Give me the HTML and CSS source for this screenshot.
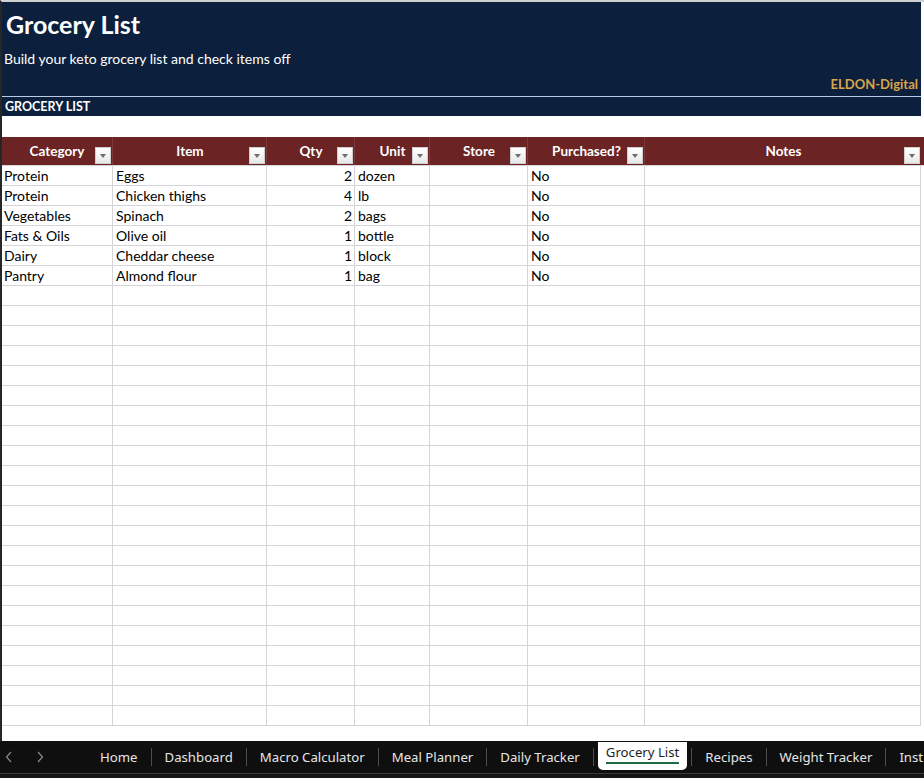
FILE: index.html
```html
<!DOCTYPE html>
<html lang="en">
<head>
  <meta charset="UTF-8" />
  <meta name="viewport" content="width=device-width, initial-scale=1" />
  <title>Grocery List</title>
  <link rel="stylesheet" href="styles.css">
</head>
<body>
  <div class="window">
    <div class="sheet">
      <header class="banner">
        <h1 class="title">Grocery List</h1>
        <p class="subtitle">Build your keto grocery list and check items off</p>
        <div class="brand">ELDON-Digital</div>
      </header>
      <div class="section-label">GROCERY LIST</div>
      <div class="blank-row"></div>

      <div class="grid">
        <div class="row head">
          <div class="cell">Category<span class="filter"></span></div>
          <div class="cell">Item<span class="filter"></span></div>
          <div class="cell">Qty<span class="filter"></span></div>
          <div class="cell">Unit<span class="filter"></span></div>
          <div class="cell">Store<span class="filter"></span></div>
          <div class="cell">Purchased?<span class="filter"></span></div>
          <div class="cell">Notes<span class="filter"></span></div>
        </div>

        <div class="row"><div class="cell">Protein</div><div class="cell">Eggs</div><div class="cell num">2</div><div class="cell">dozen</div><div class="cell"></div><div class="cell">No</div><div class="cell"></div></div>
        <div class="row"><div class="cell">Protein</div><div class="cell">Chicken thighs</div><div class="cell num">4</div><div class="cell">lb</div><div class="cell"></div><div class="cell">No</div><div class="cell"></div></div>
        <div class="row"><div class="cell">Vegetables</div><div class="cell">Spinach</div><div class="cell num">2</div><div class="cell">bags</div><div class="cell"></div><div class="cell">No</div><div class="cell"></div></div>
        <div class="row"><div class="cell">Fats &amp; Oils</div><div class="cell">Olive oil</div><div class="cell num">1</div><div class="cell">bottle</div><div class="cell"></div><div class="cell">No</div><div class="cell"></div></div>
        <div class="row"><div class="cell">Dairy</div><div class="cell">Cheddar cheese</div><div class="cell num">1</div><div class="cell">block</div><div class="cell"></div><div class="cell">No</div><div class="cell"></div></div>
        <div class="row"><div class="cell">Pantry</div><div class="cell">Almond flour</div><div class="cell num">1</div><div class="cell">bag</div><div class="cell"></div><div class="cell">No</div><div class="cell"></div></div>

        <div class="row"><div class="cell"></div><div class="cell"></div><div class="cell"></div><div class="cell"></div><div class="cell"></div><div class="cell"></div><div class="cell"></div></div>
        <div class="row"><div class="cell"></div><div class="cell"></div><div class="cell"></div><div class="cell"></div><div class="cell"></div><div class="cell"></div><div class="cell"></div></div>
        <div class="row"><div class="cell"></div><div class="cell"></div><div class="cell"></div><div class="cell"></div><div class="cell"></div><div class="cell"></div><div class="cell"></div></div>
        <div class="row"><div class="cell"></div><div class="cell"></div><div class="cell"></div><div class="cell"></div><div class="cell"></div><div class="cell"></div><div class="cell"></div></div>
        <div class="row"><div class="cell"></div><div class="cell"></div><div class="cell"></div><div class="cell"></div><div class="cell"></div><div class="cell"></div><div class="cell"></div></div>
        <div class="row"><div class="cell"></div><div class="cell"></div><div class="cell"></div><div class="cell"></div><div class="cell"></div><div class="cell"></div><div class="cell"></div></div>
        <div class="row"><div class="cell"></div><div class="cell"></div><div class="cell"></div><div class="cell"></div><div class="cell"></div><div class="cell"></div><div class="cell"></div></div>
        <div class="row"><div class="cell"></div><div class="cell"></div><div class="cell"></div><div class="cell"></div><div class="cell"></div><div class="cell"></div><div class="cell"></div></div>
        <div class="row"><div class="cell"></div><div class="cell"></div><div class="cell"></div><div class="cell"></div><div class="cell"></div><div class="cell"></div><div class="cell"></div></div>
        <div class="row"><div class="cell"></div><div class="cell"></div><div class="cell"></div><div class="cell"></div><div class="cell"></div><div class="cell"></div><div class="cell"></div></div>
        <div class="row"><div class="cell"></div><div class="cell"></div><div class="cell"></div><div class="cell"></div><div class="cell"></div><div class="cell"></div><div class="cell"></div></div>
        <div class="row"><div class="cell"></div><div class="cell"></div><div class="cell"></div><div class="cell"></div><div class="cell"></div><div class="cell"></div><div class="cell"></div></div>
        <div class="row"><div class="cell"></div><div class="cell"></div><div class="cell"></div><div class="cell"></div><div class="cell"></div><div class="cell"></div><div class="cell"></div></div>
        <div class="row"><div class="cell"></div><div class="cell"></div><div class="cell"></div><div class="cell"></div><div class="cell"></div><div class="cell"></div><div class="cell"></div></div>
        <div class="row"><div class="cell"></div><div class="cell"></div><div class="cell"></div><div class="cell"></div><div class="cell"></div><div class="cell"></div><div class="cell"></div></div>
        <div class="row"><div class="cell"></div><div class="cell"></div><div class="cell"></div><div class="cell"></div><div class="cell"></div><div class="cell"></div><div class="cell"></div></div>
        <div class="row"><div class="cell"></div><div class="cell"></div><div class="cell"></div><div class="cell"></div><div class="cell"></div><div class="cell"></div><div class="cell"></div></div>
        <div class="row"><div class="cell"></div><div class="cell"></div><div class="cell"></div><div class="cell"></div><div class="cell"></div><div class="cell"></div><div class="cell"></div></div>
        <div class="row"><div class="cell"></div><div class="cell"></div><div class="cell"></div><div class="cell"></div><div class="cell"></div><div class="cell"></div><div class="cell"></div></div>
        <div class="row"><div class="cell"></div><div class="cell"></div><div class="cell"></div><div class="cell"></div><div class="cell"></div><div class="cell"></div><div class="cell"></div></div>
        <div class="row"><div class="cell"></div><div class="cell"></div><div class="cell"></div><div class="cell"></div><div class="cell"></div><div class="cell"></div><div class="cell"></div></div>
        <div class="row"><div class="cell"></div><div class="cell"></div><div class="cell"></div><div class="cell"></div><div class="cell"></div><div class="cell"></div><div class="cell"></div></div>
      </div>
    </div>

    <nav class="tabs">
      <span class="arrow">
        <svg width="8" height="12" viewBox="0 0 8 12"><path d="M6 1 L1.5 6 L6 11" fill="none" stroke="#8a8a8a" stroke-width="1.2"/></svg>
      </span>
      <span class="arrow">
        <svg width="8" height="12" viewBox="0 0 8 12"><path d="M2 1 L6.5 6 L2 11" fill="none" stroke="#8a8a8a" stroke-width="1.2"/></svg>
      </span>
      <a class="tab first" href="#">Home</a>
      <span class="sep"></span>
      <a class="tab" href="#">Dashboard</a>
      <span class="sep"></span>
      <a class="tab" href="#">Macro Calculator</a>
      <span class="sep"></span>
      <a class="tab" href="#">Meal Planner</a>
      <span class="sep"></span>
      <a class="tab" href="#">Daily Tracker</a>
      <span class="sep"></span>
      <a class="tab active" href="#"><span class="tab-label">Grocery List</span></a>
      <span class="sep"></span>
      <a class="tab" href="#">Recipes</a>
      <span class="sep"></span>
      <a class="tab" href="#">Weight Tracker</a>
      <span class="sep"></span>
      <a class="tab" href="#">Inst</a>
    </nav>
    <div class="status"></div>
  </div>
</body>
</html>
```

FILE: styles.css
```css
/* Reset & base */
* {
  box-sizing: border-box;
}
body {
  margin: 0;
  background: #ffffff;
  font-family: 'Lato', 'Liberation Sans', sans-serif;
  color: #000;
}

.window {
  width: 924px;
  height: 778px;
  display: flex;
  flex-direction: column;
  overflow: hidden;
}

.sheet {
  flex: 1;
  overflow: hidden;
  border-top: 2px solid #d0d0d0;
  border-left: 2px solid #262626;
}

/* Banner */
.banner {
  width: 919px;
  height: 94px;
  background: #0c1f3c;
  color: #fff;
  display: flex;
  flex-direction: column;
  padding: 8px 3px 0 2px;
}

.title {
  margin: 0;
  font-size: 25px;
  line-height: 29px;
  font-weight: 700;
  padding-left: 2px;
}

.subtitle {
  margin: 11px 0 0 0;
  font-size: 14px;
  line-height: 18px;
}

.brand {
  margin-top: 7px;
  align-self: flex-end;
  font-size: 13px;
  line-height: 18px;
  font-weight: 700;
  color: #d9a548;
}

.section-label {
  width: 919px;
  height: 20px;
  background: #0c1f3c;
  border-top: 1px solid #b9cbe6;
  color: #fff;
  font-size: 12.5px;
  font-weight: 700;
  line-height: 20px;
  padding-left: 3px;
}

.blank-row {
  height: 21px;
}

/* Grid */
.row {
  display: grid;
  grid-template-columns: 111px 154px 88px 75px 98px 117px 276px;
  height: 20px;
}

.cell {
  position: relative;
  border-right: 1px solid #d4d4d9;
  border-bottom: 1px solid #d4d4d9;
  font-size: 14px;
  line-height: 20px;
  padding: 0 2px 0 2px;
  white-space: nowrap;
  overflow: hidden;
}
.row .cell:nth-child(n+2) {
  padding-left: 3px;
}
.cell.num {
  text-align: right;
  padding-right: 2px;
}

.row.head {
  height: 29px;
  background: #6b2323;
  border-bottom: 1px solid #d4d4d9;
}
.row.head .cell {
  color: #fff;
  font-size: 13.5px;
  font-weight: 700;
  text-align: center;
  line-height: 28px;
  border-right: 1px solid #7e3a3a;
  border-bottom: none;
}
.row.head .cell:last-child {
  border-right: none;
}

/* Filter button */
.filter {
  position: absolute;
  right: 1px;
  bottom: 1px;
  width: 16px;
  height: 17px;
  background: linear-gradient(#ffffff, #e8e8e8);
  border: 1px solid #cfcfcf;
}
.filter::after {
  content: "";
  position: absolute;
  left: 3.5px;
  top: 6px;
  border-left: 3.5px solid transparent;
  border-right: 3.5px solid transparent;
  border-top: 4px solid #6e6e6e;
}

/* Sheet tabs */
.tabs {
  height: 32px;
  flex-shrink: 0;
  background: #0f0f0f;
  display: flex;
  align-items: stretch;
  font-family: 'Noto Sans', 'Open Sans', sans-serif;
  font-size: 13.2px;
  white-space: nowrap;
  overflow: hidden;
}
.tabs > * {
  flex-shrink: 0;
}

.arrow {
  width: 46px;
  display: flex;
  align-items: center;
  justify-content: center;
}
.arrow:first-child {
  width: 16px;
  margin-left: 1px;
}

.tab {
  color: #e6e6e6;
  text-decoration: none;
  padding: 0 13px;
  display: flex;
  align-items: center;
}
.tab.first {
  margin-left: 24px;
}

.sep {
  width: 1px;
  background: #4c4c4c;
  margin: 7px 0;
}

.tab.active {
  background: #ffffff;
  color: #1f1f1f;
  margin: 1px 4px 3px;
  padding: 0 8px 5px;
  border-radius: 0 0 5px 5px;
}
.tab-label {
  border-bottom: 2px solid #1d6b43;
  line-height: 18px;
  padding-bottom: 1px;
}

.status {
  height: 5px;
  flex-shrink: 0;
  background: #141414;
  border-top: 1px solid #3a3a3a;
}
```
